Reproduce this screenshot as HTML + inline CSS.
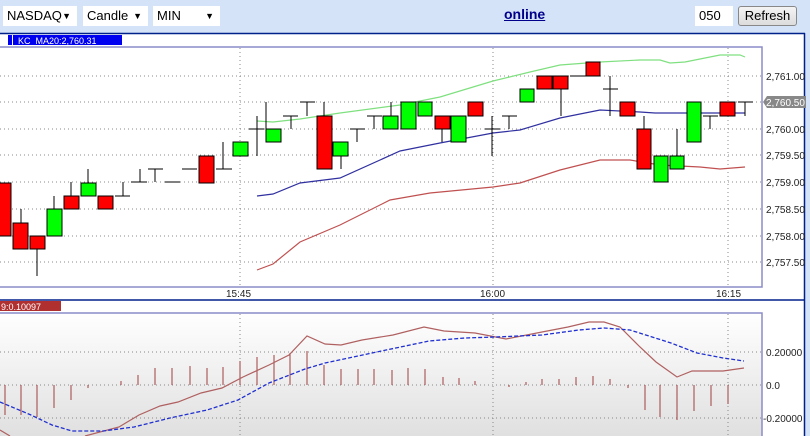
<!DOCTYPE html>
<html><head><meta charset="utf-8"><style>
body{margin:0;width:810px;height:436px;overflow:hidden;background:#d4e3f7;font-family:"Liberation Sans",sans-serif;position:relative}
.sel{position:absolute;top:6px;height:20px;background:#fff;font-size:13px;line-height:20px;padding-left:4px;box-sizing:border-box}
.sel span{position:absolute;right:6px;top:0;font-size:9px}
</style></head><body>
<div class="sel" style="left:3px;width:74px">NASDAQ<span>▼</span></div>
<div class="sel" style="left:83px;width:65px">Candle<span>▼</span></div>
<div class="sel" style="left:153px;width:67px">MIN<span>▼</span></div>
<div style="position:absolute;left:504px;top:6px;font-size:14px;font-weight:bold;color:#00008b;text-decoration:underline">online</div>
<div class="sel" style="left:695px;width:38px">050</div>
<div style="position:absolute;left:738px;top:6px;width:59px;height:20px;box-sizing:border-box;border:1px solid #888;border-radius:3px;background:linear-gradient(#f4f4f4,#dcdcdc);font-size:13px;line-height:18px;text-align:center">Refresh</div>
<svg style="position:absolute;left:0;top:0" width="810" height="436" font-family="Liberation Sans, sans-serif">
<defs><linearGradient id="g" x1="0" y1="0" x2="0" y2="1"><stop offset="0" stop-color="#fff"/><stop offset="1" stop-color="#dedede"/></linearGradient></defs>
<rect x="0" y="33" width="805" height="403" fill="#fff"/>
<line x1="0" y1="33.5" x2="805" y2="33.5" stroke="#00208a" stroke-width="1.5"/>
<line x1="804.5" y1="33" x2="804.5" y2="436" stroke="#00208a" stroke-width="1.5"/>
<rect x="8" y="35" width="114" height="10" fill="#0000f0"/>
<line x1="12.5" y1="35" x2="12.5" y2="45" stroke="#fff"/>
<text x="18" y="44" font-size="9" fill="#fff">KC_MA20:2,760.31</text>
<rect x="-1" y="47" width="763" height="240" fill="none" stroke="#8c8cc8" stroke-width="1.5"/>
<g stroke="#888" stroke-dasharray="1 3">
<line x1="0" y1="76" x2="762" y2="76"/><line x1="0" y1="102" x2="762" y2="102"/><line x1="0" y1="129" x2="762" y2="129"/><line x1="0" y1="155" x2="762" y2="155"/><line x1="0" y1="182" x2="762" y2="182"/><line x1="0" y1="209" x2="762" y2="209"/><line x1="0" y1="236" x2="762" y2="236"/><line x1="0" y1="262" x2="762" y2="262"/>
<line x1="240" y1="48" x2="240" y2="287"/><line x1="493" y1="48" x2="493" y2="287"/><line x1="728" y1="48" x2="728" y2="287"/>
</g>
<g font-size="10" fill="#222">
<text x="766" y="80">2,761.00</text>
<text x="766" y="133">2,760.00</text><text x="766" y="159">2,759.50</text><text x="766" y="186">2,759.00</text><text x="766" y="213">2,758.50</text><text x="766" y="240">2,758.00</text><text x="766" y="266">2,757.50</text>
<text x="226" y="297">15:45</text><text x="480" y="297">16:00</text><text x="716" y="297">16:15</text>
</g>
<path d="M763 102 L767 96 H806 V108 H767Z" fill="#888"/>
<text x="766" y="106" font-size="10" fill="#fff">2,760.50</text>
<polyline fill="none" stroke="#7fe07f" stroke-width="1.2" points="257,121 273,122 300,119 340,113 400,105 440,97 493,81 530,72 560,65 600,62 640,60 660,60 670,63 685,62 720,55 740,55 745,57"/>
<polyline fill="none" stroke="#3030a0" stroke-width="1.2" points="257,196 273,194 300,183 340,178 400,151 440,143 493,133 520,130 560,118 600,110 640,112 655,113 690,113 745,113"/>
<polyline fill="none" stroke="#c05050" stroke-width="1.2" points="257,270 273,264 300,242 340,225 390,200 430,193 493,187 520,183 560,170 600,160 630,160 660,165 700,167 720,169 745,167"/>
<g stroke="#000" stroke-width="1">
<line x1="21" y1="209" x2="21" y2="223"/><line x1="37" y1="249" x2="37" y2="276"/><line x1="54" y1="196" x2="54" y2="209"/><line x1="71" y1="182" x2="71" y2="196"/><line x1="88" y1="169" x2="88" y2="183"/>
<path d="M115 196H130M123 182V196M131 182H147M140 169V182M148 169H163M155 169V182M165 182H180M182 169H197M216 169H232M223 142V169M249 129H264M257 116V156M266 102V129M283 116H298M291 116V129M300 102H315M307 102V116M324 102V116M341 156V169M350 129H365M357 129V142M367 116H382M374 116V129M391 102V116M442 129V142M492 116V156M485 129H500M502 116H517M509 116V129M561 89V116M570 76H586M603 89H618M610 76V116M644 116V129M677 129V156M703 116H718M710 116V129M738 102H753M745 102V116"/>
</g>
<g stroke="#000" stroke-width="1" fill="#f00">
<rect x="-3" y="183" width="14" height="53"/><rect x="13" y="223" width="15" height="26"/><rect x="30" y="236" width="15" height="13"/><rect x="64" y="196" width="15" height="13"/><rect x="98" y="196" width="15" height="13"/><rect x="199" y="156" width="15" height="27"/><rect x="317" y="116" width="15" height="53"/><rect x="435" y="116" width="15" height="13"/><rect x="468" y="102" width="15" height="14"/><rect x="537" y="76" width="15" height="13"/><rect x="553" y="76" width="15" height="13"/><rect x="586" y="62" width="14" height="14"/><rect x="620" y="102" width="15" height="14"/><rect x="637" y="129" width="14" height="40"/><rect x="720" y="102" width="15" height="14"/>
</g>
<g stroke="#000" stroke-width="1" fill="#0f0">
<rect x="47" y="209" width="15" height="27"/><rect x="81" y="183" width="15" height="13"/><rect x="233" y="142" width="15" height="14"/><rect x="266" y="129" width="15" height="13"/><rect x="333" y="142" width="15" height="14"/><rect x="383" y="116" width="15" height="13"/><rect x="401" y="102" width="15" height="27"/><rect x="418" y="102" width="14" height="14"/><rect x="451" y="116" width="15" height="26"/><rect x="520" y="89" width="14" height="13"/><rect x="654" y="156" width="14" height="26"/><rect x="670" y="156" width="14" height="13"/><rect x="687" y="102" width="14" height="40"/>
</g>
<line x1="0" y1="300" x2="805" y2="300" stroke="#00208a" stroke-width="1.5"/>
<rect x="0" y="301" width="61" height="10" fill="#b03030"/>
<text x="1" y="310" font-size="9" fill="#fff">9:0.10097</text>
<rect x="-1" y="313" width="763" height="130" fill="url(#g)" stroke="#8c8cc8" stroke-width="1.5"/>
<g stroke="#888" stroke-dasharray="1 3">
<line x1="0" y1="352" x2="762" y2="352"/><line x1="0" y1="385" x2="762" y2="385"/><line x1="0" y1="418" x2="762" y2="418"/>
<line x1="240" y1="314" x2="240" y2="436"/><line x1="493" y1="314" x2="493" y2="436"/><line x1="728" y1="314" x2="728" y2="436"/>
</g>
<g font-size="10" fill="#222"><text x="766" y="356">0.20000</text><text x="766" y="389">0.0</text><text x="763" y="422">-0.20000</text></g>
<path stroke="#a04040" stroke-width="1" d="M5 385V415M21 385V415M37 385V417M54 385V408M71 385V400M88 385V388M121 385V381M138 385V375M155 385V368M172 385V368M190 385V366M207 385V368M223 385V367M240 385V361M257 385V357M274 385V355M290 385V353M307 385V351M324 385V365M341 385V369M358 385V369M374 385V369M392 385V370M408 385V368M425 385V369M443 385V377M459 385V378M475 385V381M509 385V387M526 385V382M542 385V379M559 385V379M576 385V377M593 385V376M610 385V379M628 385V388M645 385V410M660 385V417M677 385V420M694 385V411M711 385V406M728 385V404"/>
<path fill="none" stroke="#b06060" stroke-width="1.2" d="M0 430L10 436M85 436L119 427 139 415 160 406 178 402 201 393 222 388 243 377 269 365 289 355 307 336 325 344 341 345 362 340 393 335 424 327 444 331 475 333 506 339 542 332 568 327 589 322 604 322 620 327 640 347 656 362 677 377 692 371 723 371 744 368"/>
<polyline fill="none" stroke="#2030d0" stroke-width="1.3" stroke-dasharray="4 2" points="0,402 31,415 52,425 72,431 103,431 134,427 170,418 207,410 238,400 269,383 305,369 325,363 372,353 429,341 465,338 496,337 542,335 579,330 604,328 630,330 671,343 697,353 723,358 744,361"/>
</svg>
</body></html>
